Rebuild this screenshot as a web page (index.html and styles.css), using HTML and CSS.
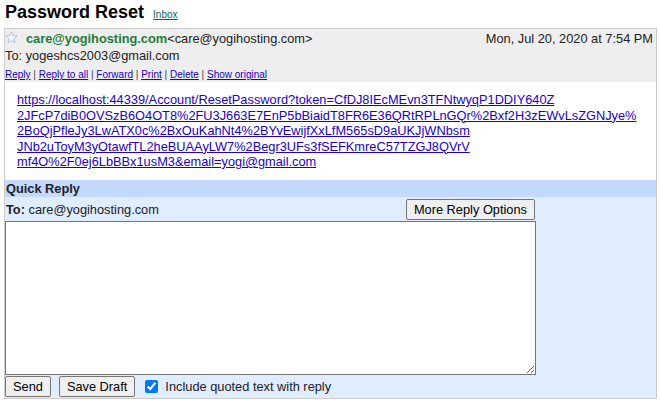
FILE: index.html
```html
<!DOCTYPE html>
<html>
<head>
<meta charset="utf-8">
<link rel="stylesheet" href="styles.css">
</head>
<body>
<div class="title-row">
  <h1 class="title">Password Reset</h1>
  <a class="label" href="#">Inbox</a>
</div>
<div class="msg">
  <div class="head">
    <div class="from-row">
      <div class="from">
        <svg class="star" width="13" height="13" viewBox="0 0 13 13"><path d="M6.5 0.8 L8.1 4.6 L12.2 4.9 L9.1 7.6 L10.1 11.7 L6.5 9.5 L2.9 11.7 L3.9 7.6 L0.8 4.9 L4.9 4.6 Z" fill="#f4f8ff" stroke="#a9bde0" stroke-width="0.9" stroke-linejoin="round"/></svg>
        <b class="sender">care@yogihosting.com</b><span>&lt;care@yogihosting.com&gt;</span>
      </div>
      <div class="date">Mon, Jul 20, 2020 at 7:54 PM</div>
    </div>
    <div class="to">To: yogeshcs2003@gmail.com</div>
    <div class="actions"><a href="#">Reply</a> | <a href="#">Reply to all</a> | <a href="#">Forward</a> | <a href="#">Print</a> | <a href="#">Delete</a> | <a href="#">Show original</a></div>
  </div>
  <div class="body">
    <a href="#">https://localhost:44339/Account/ResetPassword?token=CfDJ8IEcMEvn3TFNtwyqP1DDIY640Z<br>2JFcP7diB0OVSzB6O4OT8%2FU3J663E7EnP5bBiaidT8FR6E36QRtRPLnGQr%2Bxf2H3zEWvLsZGNJye%<br>2BoQjPfleJy3LwATX0c%2BxOuKahNt4%2BYvEwijfXxLfM565sD9aUKJjWNbsm<br>JNb2uToyM3yOtawfTL2heBUAAyLW7%2Begr3UFs3fSEFKmreC57TZGJ8QVrV<br>mf4O%2F0ej6LbBBx1usM3&amp;email=yogi@gmail.com</a>
  </div>
  <div class="qr-bar">Quick Reply</div>
  <div class="qr">
    <div class="form">
      <div class="qr-to">
        <div><b>To:</b> care@yogihosting.com</div>
        <button class="btn">More Reply Options</button>
      </div>
      <textarea class="ta"></textarea>
      <div class="bottom">
        <button class="btn">Send</button>
        <button class="btn">Save Draft</button>
        <label class="chk"><input type="checkbox" checked> Include quoted text with reply</label>
      </div>
    </div>
  </div>
</div>
</body>
</html>
```

FILE: styles.css
```css
html, body {
  margin: 0;
  padding: 0;
  background: #fff;
  font-family: "Liberation Sans", Arial, sans-serif;
  color: #222;
}
.title-row {
  display: flex;
  align-items: baseline;
  padding: 0 0 0 5px;
  height: 28px;
}
.title {
  margin: 0;
  font-size: 18px;
  font-weight: bold;
  color: #000;
  line-height: 24px;
}
.label {
  margin-left: 9px;
  font-size: 10px;
  color: #006666;
}
.msg {
  margin-left: 4px;
  width: 651px;
  border: 1px solid #cccccc;
}
.head {
  background: #eeeeee;
  padding: 1px 1px 1px 0;
  font-size: 12.8px;
}
.from-row {
  display: flex;
  justify-content: space-between;
  align-items: center;
  height: 17px;
}
.from {
  display: flex;
  align-items: center;
}
.star {
  margin: 0 8px 2px 0;
}
.sender {
  color: #1f7a3a;
}
.date {
  color: #222;
  padding-right: 2px;
}
.to {
  height: 17px;
  line-height: 17px;
}
.actions {
  margin-top: 5px;
  font-size: 10px;
  line-height: 12px;
  color: #444;
}
.actions a {
  color: #2200cc;
}
.body {
  background: #fff;
  padding: 10px 12px;
  height: 78px;
  font-size: 12.8px;
  line-height: 15.5px;
}
.body a {
  color: #2200cc;
}
.qr-bar {
  background: #c3d9ff;
  font-weight: bold;
  font-size: 12.8px;
  height: 17px;
  line-height: 17px;
  padding-left: 1px;
  color: #222;
}
.qr {
  background: #e0ecff;
  padding: 1px 0 1px 0;
}
.form {
  width: 531px;
}
.qr-to {
  display: flex;
  justify-content: space-between;
  align-items: center;
  font-size: 12.8px;
  height: 23px;
  padding-left: 1px;
}
.btn {
  font-family: "Liberation Sans", Arial, sans-serif;
  font-size: 12.8px;
  color: #000;
  background: #efefef;
  border: 1px solid #767676;
  border-radius: 2px;
  padding: 1px 7px;
  height: 21px;
}
.qr-to .btn {
  margin-right: 1px;
}
.ta {
  display: block;
  box-sizing: border-box;
  width: 531px;
  height: 154px;
  margin: 0 0 1px 0;
  border: 1px solid #767676;
  background: #fff;
}
.bottom {
  display: flex;
  align-items: center;
  gap: 8px;
  font-size: 12.8px;
}
.chk {
  display: flex;
  align-items: center;
  margin-left: 2px;
}
.chk input {
  margin: 0 7px 0 0;
  width: 13px;
  height: 13px;
  accent-color: #0075ff;
}
```
